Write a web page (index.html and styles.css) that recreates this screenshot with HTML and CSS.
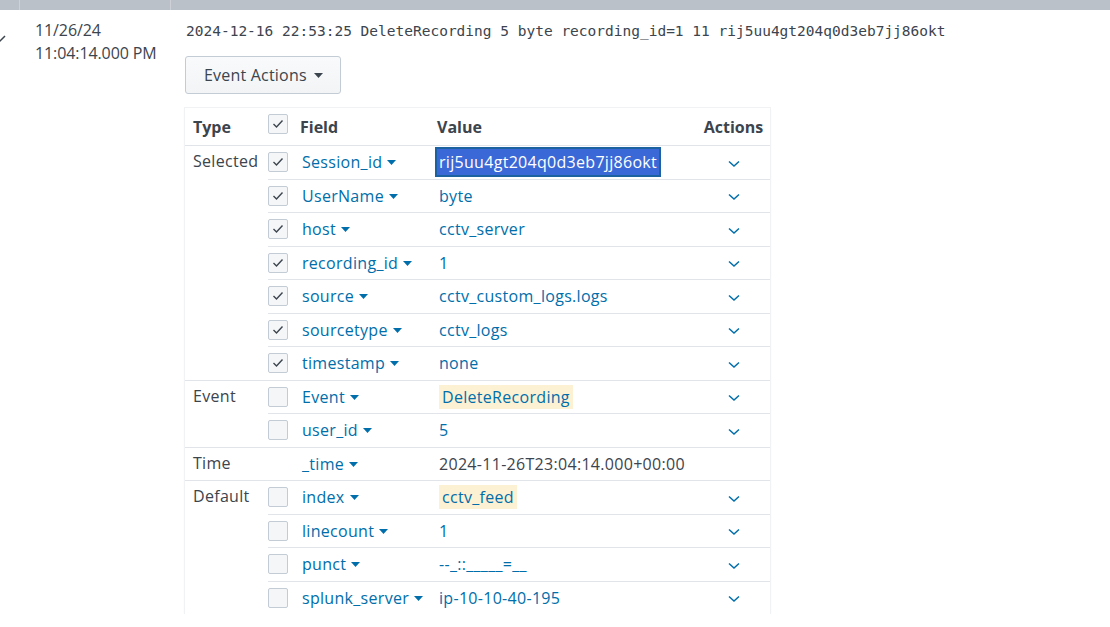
FILE: index.html
```html
<!DOCTYPE html>
<html>
<head>
<meta charset="utf-8">
<link rel="stylesheet" href="styles.css">
</head>
<body>
<div class="topbar"><div class="tb tb1"></div><div class="tb tb2"></div><div class="tb tb3"></div></div>
<div class="event">
  <div class="gutter"><svg class="expand" width="12" height="8" viewBox="0 0 12 8"><polyline points="1,1 6,6 11,1" fill="none" stroke="#3c444d" stroke-width="1.5"/></svg></div>
  <div class="time"><div>11/26/24</div><div>11:04:14.000 PM</div></div>
  <div class="main">
    <div class="raw">2024-12-16 22:53:25 DeleteRecording 5 byte recording_id=1 11 rij5uu4gt204q0d3eb7jj86okt</div>
    <button class="btn">Event Actions <svg class="caret" width="9" height="5" viewBox="0 0 9 5"><polygon points="0,0 9,0 4.5,5" fill="#3c444d"/></svg></button>
    <table class="fields">
      <colgroup><col class="c-type"><col class="c-cb"><col class="c-field"><col class="c-val"><col class="c-act"></colgroup>
      <thead>
        <tr><th class="type">Type</th><th class="cbcell"><span class="cb cb-head"><svg width="12" height="10" viewBox="0 0 12 10"><polyline points="1.5,5 4.5,8 10.5,1.5" fill="none" stroke="#3c444d" stroke-width="1.4"/></svg></span></th><th>Field</th><th>Value</th><th class="act">Actions</th></tr>
      </thead>
      <tbody>
        <tr><td class="type" rowspan="7">Selected</td><td class="cbcell"><span class="cb"><svg width="12" height="10" viewBox="0 0 12 10"><polyline points="1.5,5 4.5,8 10.5,1.5" fill="none" stroke="#3c444d" stroke-width="1.4"/></svg></span></td><td class="field">Session_id<svg class="fc" width="9" height="5" viewBox="0 0 9 5"><polygon points="0,0 9,0 4.5,5"/></svg></td><td class="val"><span class="sel">rij5uu4gt204q0d3eb7jj86okt</span></td><td class="act"><svg class="chev" width="12" height="8" viewBox="0 0 12 8"><polyline points="1,1.5 6,6 11,1.5"/></svg></td></tr>
        <tr><td class="cbcell"><span class="cb"><svg width="12" height="10" viewBox="0 0 12 10"><polyline points="1.5,5 4.5,8 10.5,1.5" fill="none" stroke="#3c444d" stroke-width="1.4"/></svg></span></td><td class="field">UserName<svg class="fc" width="9" height="5" viewBox="0 0 9 5"><polygon points="0,0 9,0 4.5,5"/></svg></td><td class="val">byte</td><td class="act"><svg class="chev" width="12" height="8" viewBox="0 0 12 8"><polyline points="1,1.5 6,6 11,1.5"/></svg></td></tr>
        <tr><td class="cbcell"><span class="cb"><svg width="12" height="10" viewBox="0 0 12 10"><polyline points="1.5,5 4.5,8 10.5,1.5" fill="none" stroke="#3c444d" stroke-width="1.4"/></svg></span></td><td class="field">host<svg class="fc" width="9" height="5" viewBox="0 0 9 5"><polygon points="0,0 9,0 4.5,5"/></svg></td><td class="val">cctv_server</td><td class="act"><svg class="chev" width="12" height="8" viewBox="0 0 12 8"><polyline points="1,1.5 6,6 11,1.5"/></svg></td></tr>
        <tr><td class="cbcell"><span class="cb"><svg width="12" height="10" viewBox="0 0 12 10"><polyline points="1.5,5 4.5,8 10.5,1.5" fill="none" stroke="#3c444d" stroke-width="1.4"/></svg></span></td><td class="field">recording_id<svg class="fc" width="9" height="5" viewBox="0 0 9 5"><polygon points="0,0 9,0 4.5,5"/></svg></td><td class="val">1</td><td class="act"><svg class="chev" width="12" height="8" viewBox="0 0 12 8"><polyline points="1,1.5 6,6 11,1.5"/></svg></td></tr>
        <tr><td class="cbcell"><span class="cb"><svg width="12" height="10" viewBox="0 0 12 10"><polyline points="1.5,5 4.5,8 10.5,1.5" fill="none" stroke="#3c444d" stroke-width="1.4"/></svg></span></td><td class="field">source<svg class="fc" width="9" height="5" viewBox="0 0 9 5"><polygon points="0,0 9,0 4.5,5"/></svg></td><td class="val">cctv_custom_logs.logs</td><td class="act"><svg class="chev" width="12" height="8" viewBox="0 0 12 8"><polyline points="1,1.5 6,6 11,1.5"/></svg></td></tr>
        <tr><td class="cbcell"><span class="cb"><svg width="12" height="10" viewBox="0 0 12 10"><polyline points="1.5,5 4.5,8 10.5,1.5" fill="none" stroke="#3c444d" stroke-width="1.4"/></svg></span></td><td class="field">sourcetype<svg class="fc" width="9" height="5" viewBox="0 0 9 5"><polygon points="0,0 9,0 4.5,5"/></svg></td><td class="val">cctv_logs</td><td class="act"><svg class="chev" width="12" height="8" viewBox="0 0 12 8"><polyline points="1,1.5 6,6 11,1.5"/></svg></td></tr>
        <tr><td class="cbcell"><span class="cb"><svg width="12" height="10" viewBox="0 0 12 10"><polyline points="1.5,5 4.5,8 10.5,1.5" fill="none" stroke="#3c444d" stroke-width="1.4"/></svg></span></td><td class="field">timestamp<svg class="fc" width="9" height="5" viewBox="0 0 9 5"><polygon points="0,0 9,0 4.5,5"/></svg></td><td class="val">none</td><td class="act"><svg class="chev" width="12" height="8" viewBox="0 0 12 8"><polyline points="1,1.5 6,6 11,1.5"/></svg></td></tr>

        <tr><td class="type" rowspan="2">Event</td><td class="cbcell"><span class="cb"></span></td><td class="field">Event<svg class="fc" width="9" height="5" viewBox="0 0 9 5"><polygon points="0,0 9,0 4.5,5"/></svg></td><td class="val"><span class="hl">DeleteRecording</span></td><td class="act"><svg class="chev" width="12" height="8" viewBox="0 0 12 8"><polyline points="1,1.5 6,6 11,1.5"/></svg></td></tr>
        <tr><td class="cbcell"><span class="cb"></span></td><td class="field">user_id<svg class="fc" width="9" height="5" viewBox="0 0 9 5"><polygon points="0,0 9,0 4.5,5"/></svg></td><td class="val">5</td><td class="act"><svg class="chev" width="12" height="8" viewBox="0 0 12 8"><polyline points="1,1.5 6,6 11,1.5"/></svg></td></tr>

        <tr><td class="type">Time</td><td class="cbcell"></td><td class="field">_time<svg class="fc" width="9" height="5" viewBox="0 0 9 5"><polygon points="0,0 9,0 4.5,5"/></svg></td><td class="val plain">2024-11-26T23:04:14.000+00:00</td><td class="act"></td></tr>

        <tr><td class="type" rowspan="4">Default</td><td class="cbcell"><span class="cb"></span></td><td class="field">index<svg class="fc" width="9" height="5" viewBox="0 0 9 5"><polygon points="0,0 9,0 4.5,5"/></svg></td><td class="val"><span class="hl">cctv_feed</span></td><td class="act"><svg class="chev" width="12" height="8" viewBox="0 0 12 8"><polyline points="1,1.5 6,6 11,1.5"/></svg></td></tr>
        <tr><td class="cbcell"><span class="cb"></span></td><td class="field">linecount<svg class="fc" width="9" height="5" viewBox="0 0 9 5"><polygon points="0,0 9,0 4.5,5"/></svg></td><td class="val">1</td><td class="act"><svg class="chev" width="12" height="8" viewBox="0 0 12 8"><polyline points="1,1.5 6,6 11,1.5"/></svg></td></tr>
        <tr><td class="cbcell"><span class="cb"></span></td><td class="field">punct<svg class="fc" width="9" height="5" viewBox="0 0 9 5"><polygon points="0,0 9,0 4.5,5"/></svg></td><td class="val">--_::_____=__</td><td class="act"><svg class="chev" width="12" height="8" viewBox="0 0 12 8"><polyline points="1,1.5 6,6 11,1.5"/></svg></td></tr>
        <tr><td class="cbcell"><span class="cb"></span></td><td class="field">splunk_server<svg class="fc" width="9" height="5" viewBox="0 0 9 5"><polygon points="0,0 9,0 4.5,5"/></svg></td><td class="val">ip-10-10-40-195</td><td class="act"><svg class="chev" width="12" height="8" viewBox="0 0 12 8"><polyline points="1,1.5 6,6 11,1.5"/></svg></td></tr>
      </tbody>
    </table>
  </div>
</div>
</body>
</html>
```

FILE: styles.css
```css
html, body {
  margin: 0;
  padding: 0;
  background: #ffffff;
}
body {
  font-family: "Open Sans", "Liberation Sans", sans-serif;
  font-size: 16px;
  color: #3c444d;
}
.topbar {
  display: flex;
  height: 10px;
  background: #bac1c9;
}
.tb { height: 10px; }
.tb1 { width: 19px; border-right: 1px solid #ccd2d8; }
.tb2 { width: 150px; border-right: 1px solid #ccd2d8; }
.tb3 { flex: 1; }

.event {
  display: flex;
  align-items: flex-start;
}
.gutter {
  width: 35px;
  flex: none;
  padding-top: 25px;
}
.expand {
  display: block;
  margin-left: -6px;
}
.time {
  width: 150px;
  flex: none;
  padding-top: 9px;
  line-height: 23px;
  font-size: 16px;
  letter-spacing: -0.1px;
}
.main {
  flex: 1;
  padding-top: 11px;
}
.raw {
  font-family: "DejaVu Sans Mono", "Liberation Mono", monospace;
  font-size: 14.5px;
  line-height: 20px;
  padding-left: 1px;
  color: #3c444d;
}
.btn {
  display: flex;
  align-items: center;
  gap: 7px;
  margin-top: 15px;
  height: 38px;
  width: 156px;
  padding: 0 0 0 18px;
  font-family: "Open Sans", "Liberation Sans", sans-serif;
  font-size: 16px;
  letter-spacing: 0.2px;
  color: #3c444d;
  background: linear-gradient(#f9fafb, #f2f4f6);
  border: 1px solid #c3cbd4;
  border-radius: 3px;
}
.btn .caret { display: block; }

.fields {
  margin-top: 14px;
  border-collapse: collapse;
  table-layout: fixed;
  width: 585px;
  letter-spacing: 0.3px;
  box-shadow: 0 0 0 1px #f0f2f4, 0 1px 2px rgba(0,0,0,0.12);
}
.c-type { width: 83px; }
.c-cb { width: 32px; }
.c-field { width: 137px; }
.c-val { width: 263px; }
.c-act { width: 70px; }

.fields th {
  height: 37px;
  padding: 0;
  text-align: left;
  font-weight: 700;
  font-size: 16px;
  letter-spacing: 0;
  color: #3c444d;
  vertical-align: middle;
}
.fields th.type { padding-left: 8px; }
.fields th.act { text-align: center; padding-right: 2px; }
.cb-head { position: relative; top: -3px; }

.fields td {
  height: 32.5px;
  padding: 0;
  border-top: 1px solid #e1e5ea;
  vertical-align: middle;
  white-space: nowrap;
}
.fields td.type {
  vertical-align: top;
  padding-left: 8px;
  line-height: 30px;
}
.cbcell { line-height: 0; }
.cb {
  display: inline-flex;
  align-items: center;
  justify-content: center;
  box-sizing: border-box;
  width: 20px;
  height: 20px;
  border: 1px solid #c3cbd4;
  border-radius: 2px;
  background: #f5f6f8;
}
.field {
  color: #006eaa;
  padding-left: 2px !important;
}
.fc {
  fill: #006eaa;
  margin-left: 5px;
  vertical-align: middle;
  position: relative;
  top: -1px;
}
.val {
  color: #006eaa;
  padding-left: 2px !important;
}
.val.plain { color: #3c444d; }
.sel {
  display: inline-block;
  margin-left: -4px;
  padding: 0 2px;
  line-height: 26px;
  background: #3a68d6;
  border: 2px solid #1c62a0;
  color: #ffffff;
}
.hl {
  display: inline-block;
  padding: 0 3px;
  line-height: 24px;
  background: #fdf1d4;
}
.act {
  text-align: center;
  padding-right: 3px !important;
}
.chev {
  fill: none;
  stroke: #006eaa;
  stroke-width: 1.5;
  vertical-align: middle;
}
```
